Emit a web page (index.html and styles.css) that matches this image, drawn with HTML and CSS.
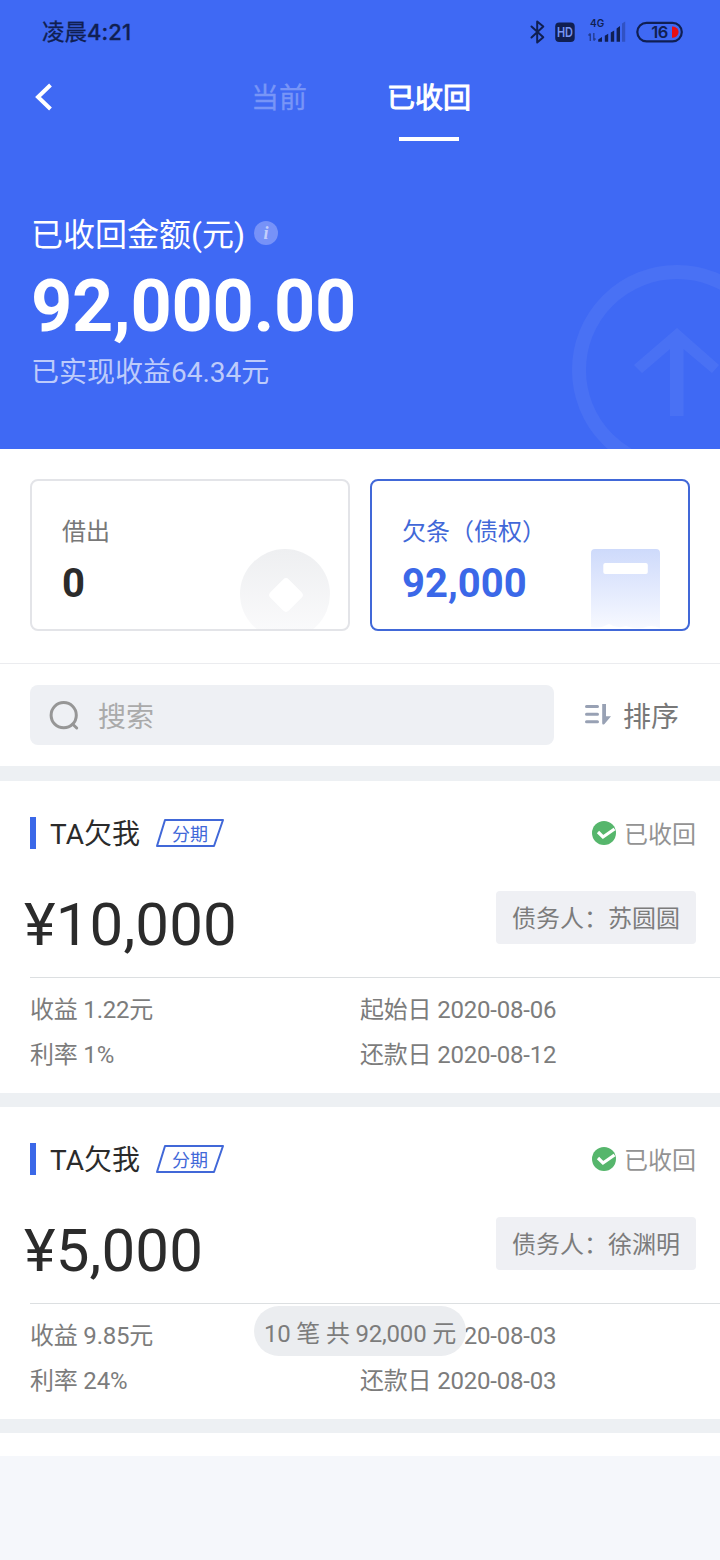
FILE: index.html
```html
<!DOCTYPE html>
<html lang="zh-CN">
<head>
<meta charset="utf-8">
<title>已收回</title>
<link rel="stylesheet" href="styles.css">
</head>
<body>
<main class="screen">
  <header class="hero">
    <div class="status">
      <span class="clock">凌晨<b>4:21</b></span>
      <svg class="sys" width="160" height="30" viewBox="525 15 160 30">
        <path d="M531.5 25.500 L543.300 36.200 L537.200 41.500 V20.500 L543.300 25.500 L531.500 36.500" fill="none" stroke="#101f52" stroke-width="2" stroke-linejoin="round" stroke-linecap="round"/>
        <rect x="555.200" y="21.500" width="19.500" height="19.500" rx="4" fill="#101f52"/>
        <text x="565" y="36" text-anchor="middle" class="hd" textLength="16" lengthAdjust="spacingAndGlyphs">HD</text>
        <text x="590" y="26" class="net">4G</text>
        <path d="M590.3 40 V32.500 M588.5 34.500 L590.3 32.500 M593.800 32 V39.500 M595.500 37.500 L593.800 39.500" fill="none" stroke="#101f52" stroke-opacity=".6" stroke-width="1.400"/>
        <path d="M598.200 40.800 V38.500 L602 36 V40.800Z M604.800 34.800 L608.200 32.800 V40.800 H604.800Z M610.800 31.500 L614.200 29.500 V40.800 H610.800Z M616.600 27.500 L620 25 V40.800 H616.600Z" fill="#101f52"/>
        <path d="M622 22.500 L625.200 20.500 V40.800 H622Z" fill="#101f52" fill-opacity=".3"/>
        <rect x="637.300" y="21.800" width="44.500" height="18.600" rx="9.300" fill="none" stroke="#101f52" stroke-width="2.200"/>
        <path d="M672 25.500 H673 A5.600 5.600 0 0 1 673 36.700 H672Z" fill="#e80d12"/>
        <text x="659.500" y="37" text-anchor="middle" class="batt">16</text>
      </svg>
    </div>
    <nav class="nav">
      <svg class="back" width="20" height="30" viewBox="0 0 20 30"><path d="M17.500 3 L5 15 L17.500 27" fill="none" stroke="#fff" stroke-width="4"/></svg>
      <a class="tab">当前</a>
      <a class="tab tab-on">已收回</a>
    </nav>
    <section class="total">
      <div class="total-label"><span class="label-text">已收回金额(元)</span><span class="info">i</span></div>
      <div class="total-value">92,000.00</div>
      <div class="total-note">已实现收益64.34元</div>
    </section>
    <svg class="hero-art" width="150" height="185" viewBox="570 264 150 185">
      <g fill="none" stroke="#fff">
        <circle cx="677" cy="370" r="98" stroke-width="14" stroke-opacity=".055"/>
        <path d="M634 365 L677 328 L719 365 L712 373 L683.500 349 V416 H670 V349 L642 373Z" fill="#fff" fill-opacity=".055" stroke="none"/>
      </g>
    </svg>
  </header>

  <section class="kinds">
    <div class="kind">
      <span class="kind-name">借出</span><strong class="kind-value">0</strong>
      <svg class="kind-art" width="90" height="81" viewBox="0 0 90 81">
        <defs><linearGradient id="coin" x1="0" y1="0" x2="0" y2="1"><stop offset="0" stop-color="#eeeff1"/><stop offset="1" stop-color="#fbfbfc"/></linearGradient></defs>
        <circle cx="45" cy="45" r="45" fill="url(#coin)"/>
        <rect x="33" y="33" width="26" height="26" rx="4" fill="#fff" transform="rotate(45 46 46)"/>
      </svg>
    </div>
    <div class="kind kind-on">
      <span class="kind-name">欠条（债权）</span><strong class="kind-value">92,000</strong>
      <svg class="kind-art" width="69" height="81" viewBox="0 0 69 81">
        <defs><linearGradient id="note" x1="0" y1="0" x2="0" y2="1"><stop offset="0" stop-color="#cedafb"/><stop offset="1" stop-color="#f7f9ff"/></linearGradient></defs>
        <path d="M0 4 Q0 0 4 0 H65 Q69 0 69 4 V79 Q60 75 52 79 Q43 80 35 77 Q26 80 18 75 Q9 80 0 78Z" fill="url(#note)"/>
        <rect x="12.300" y="14" width="44.500" height="11" rx="2" fill="#fff"/>
      </svg>
    </div>
  </section>

  <section class="tools">
    <div class="search">
      <svg width="32" height="32" viewBox="0 0 32 32" fill="none" stroke="#969696" stroke-width="3" stroke-linecap="round"><circle cx="15.700" cy="16.200" r="12.600"/><path d="M25 25.500 L28.700 29"/></svg>
      <span>搜索</span>
    </div>
    <div class="sort">
      <svg width="28" height="24" viewBox="0 0 28 24" fill="none" stroke="#98a1b4" stroke-width="3" stroke-linecap="round"><path d="M2.500 3.500 H13.500 M2.500 11.300 H13.500 M2.500 18.700 H13.500"/><path d="M18.200 1 H22 V13.200 H27 L20.500 21 Q18.200 22.500 18.200 20Z" fill="#98a1b4" stroke="none"/></svg>
      <span>排序</span>
    </div>
  </section>

  <section class="list">
    <article class="loan">
      <div class="loan-head">
        <h2>TA欠我</h2>
        <span class="tag"><svg width="70" height="30" viewBox="0 0 70 30"><path d="M10 2 H68 L59 28 H2Z" fill="none" stroke="#4168d8" stroke-width="2" stroke-linejoin="round"/></svg><i>分期</i></span>
        <span class="state"><svg width="24" height="24" viewBox="0 0 24 24"><circle cx="12" cy="12" r="12" fill="#56b66c"/><path d="M6 11 L11 16 L22.500 8" fill="none" stroke="#fff" stroke-width="3.200"/></svg><span>已收回</span></span>
      </div>
      <div class="loan-sum"><strong>¥10,000</strong><span class="debtor">债务人：苏圆圆</span></div>
      <div class="facts"><span>收益 1.22元</span><span>起始日 2020-08-06</span><span>利率 1%</span><span>还款日 2020-08-12</span></div>
    </article>
    <article class="loan">
      <div class="loan-head">
        <h2>TA欠我</h2>
        <span class="tag"><svg width="70" height="30" viewBox="0 0 70 30"><path d="M10 2 H68 L59 28 H2Z" fill="none" stroke="#4168d8" stroke-width="2" stroke-linejoin="round"/></svg><i>分期</i></span>
        <span class="state"><svg width="24" height="24" viewBox="0 0 24 24"><circle cx="12" cy="12" r="12" fill="#56b66c"/><path d="M6 11 L11 16 L22.500 8" fill="none" stroke="#fff" stroke-width="3.200"/></svg><span>已收回</span></span>
      </div>
      <div class="loan-sum"><strong>¥5,000</strong><span class="debtor">债务人：徐渊明</span></div>
      <div class="facts"><span>收益 9.85元</span><span>起始日 2020-08-03</span><span>利率 24%</span><span>还款日 2020-08-03</span></div>
    </article>
    <div class="list-end"></div>
  </section>
  <div class="summary">10 笔 共 92,000 元</div>
</main>
</body>
</html>
```
FILE: styles.css
```css
* { box-sizing: border-box; }
body {
  margin: 0;
  background: #f5f7fb;
  font-family: Roboto, "Noto Sans CJK SC", sans-serif;
  color: #2b2b2b;
}
svg { display: block; flex: none; }
.screen { position: relative; width: 720px; height: 1560px; overflow: hidden; }

.hero { position: relative; height: 449px; background: #3f69f4; color: #fff; }
.hero-art { position: absolute; right: 0; bottom: 0; }
.status {
  height: 62px;
  padding: 0 35px 0 42px;
  display: flex;
  align-items: center;
  justify-content: space-between;
  color: #101f52;
}
.clock { padding-top: 1px; font-size: 22.5px; line-height: 30px; -webkit-text-stroke: .3px #101f52; }
.clock b { font-family: Inter, sans-serif; font-size: 22px; font-weight: 500; letter-spacing: .1px; }
.sys { margin-top: -1px; }
.hd { font: 600 13px Inter, sans-serif; fill: #7996f5; }
.net { font: 600 10px Inter, sans-serif; fill: #101f52; }
.batt { font: 600 16.5px Inter, sans-serif; letter-spacing: -.5px; fill: #101f52; }

.nav { height: 82px; display: flex; align-items: flex-start; padding-left: 33px; }
.back { margin-top: 20px; }
.tab {
  height: 79px;
  margin-left: 198px;
  padding-top: 16px;
  font-size: 28px;
  line-height: 42px;
  color: #7895f7;
  -webkit-text-stroke: .3px;
}
.tab-on { margin-left: 80px; color: #fff; -webkit-text-stroke: 1px; }
.tab-on::after { content: ""; display: block; width: 60px; height: 4px; margin: 17px auto 0; background: #fff; }

.total { padding: 69px 0 0 31px; }
.total-label { display: flex; align-items: center; font-size: 32px; line-height: 40px; }
.label-text { padding-top: 2px; margin-bottom: -2px; }
.info {
  width: 24px;
  height: 24px;
  margin-left: 9px;
  border-radius: 50%;
  background: #7792f8;
  color: #c3cffc;
  font: italic 700 18px/25px "Liberation Serif", serif;
  text-align: center;
}
.total-value { margin-top: 14px; font-size: 72px; line-height: 80px; font-weight: 700; letter-spacing: -.3px; }
.total-note { margin-top: 6px; font-size: 28px; line-height: 40px; color: #bdcbfb; }

.kinds {
  height: 215px;
  padding: 30px;
  display: grid;
  grid-template-columns: 1fr 1fr;
  gap: 20px;
  background: #fff;
  border-bottom: 1px solid #ebecef;
}
.kind {
  position: relative;
  height: 152px;
  padding: 33px 30px 0;
  display: flex;
  flex-direction: column;
  border: 2px solid #e3e4e8;
  border-radius: 8px;
  overflow: hidden;
}
.kind-name { font-size: 24px; line-height: 36px; color: #787878; }
.kind-value { margin-top: 11px; font-size: 40px; line-height: 46px; font-weight: 700; }
.kind-art { position: absolute; right: 18px; bottom: -1px; }
.kind-on { border-color: #4168d8; }
.kind-on .kind-name { color: #4168d8; }
.kind-on .kind-value { color: #3b68e8; }
.kind-on .kind-art { right: 28px; }

.tools { height: 102px; padding: 21px 0 0 30px; display: flex; background: #fff; }
.search {
  width: 524px;
  height: 60px;
  padding-left: 18px;
  display: flex;
  align-items: center;
  gap: 18px;
  border-radius: 8px;
  background: #eef0f4;
  color: #aaa;
  font-size: 28px;
}
.sort { height: 60px; margin-left: 30px; display: flex; align-items: center; gap: 11px; color: #787878; font-size: 28px; }

.list { background: #fff; }
.loan { height: 326px; border-top: 14px solid #edf0f3; }
.loan:first-child { height: 327px; border-top-width: 15px; }
.loan-head { height: 104px; padding: 36px 24px 36px 30px; display: flex; align-items: center; }
.loan-head h2 {
  height: 32px;
  margin: 0;
  padding-left: 14px;
  border-left: 6px solid #3b68e8;
  font-size: 28px;
  line-height: 36px;
  font-weight: 400;
}
.tag { display: grid; place-items: center; margin-left: 15px; }
.tag > * { grid-area: 1 / 1; }
.tag i { padding-top: 3px; font-style: normal; font-size: 18px; line-height: 28px; color: #4168d8; }
.state { margin-left: auto; display: flex; align-items: center; gap: 8px; font-size: 24px; line-height: 32px; color: #939393; }
.state span { padding-top: 3px; }
.loan-sum { height: 92px; padding: 0 24px; display: flex; justify-content: space-between; }
.loan-sum strong { font-size: 60px; line-height: 80px; font-weight: 400; letter-spacing: .15px; }
.debtor {
  height: 53px;
  margin-top: 6px;
  padding: 0 16px;
  border-radius: 4px;
  background: #eff0f4;
  color: #7c7c7c;
  font-size: 24px;
  line-height: 56px;
}
.facts {
  margin-left: 30px;
  padding-top: 10px;
  display: grid;
  grid-template-columns: 330px 1fr;
  grid-auto-rows: 45px;
  border-top: 1px solid #dcdfe1;
  color: #7c7c7c;
  font-size: 24px;
  line-height: 45px;
  letter-spacing: -.2px;
}
.list-end { height: 37px; border-top: 14px solid #edf0f3; }
.summary {
  position: absolute;
  left: 254px;
  top: 1306px;
  width: 212px;
  height: 50px;
  border-radius: 25px;
  background: #ebedf0;
  color: #7c7c7c;
  font-size: 24px;
  line-height: 56px;
  letter-spacing: -.2px;
  text-align: center;
  white-space: nowrap;
}
```
